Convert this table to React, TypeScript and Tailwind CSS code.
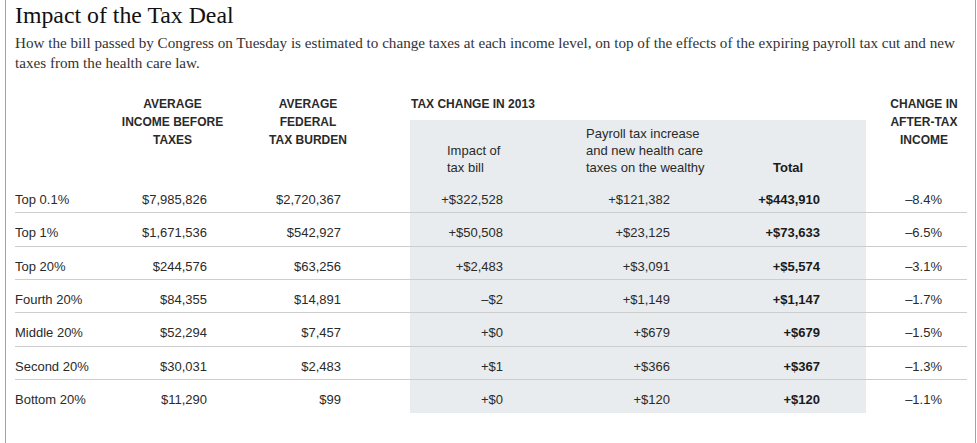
import React from "react";

const rows: [string, string, string, string, string, string, string][] = [
  ["Top 0.1%", "$7,985,826", "$2,720,367", "+$322,528", "+$121,382", "+$443,910", "–8.4%"],
  ["Top 1%", "$1,671,536", "$542,927", "+$50,508", "+$23,125", "+$73,633", "–6.5%"],
  ["Top 20%", "$244,576", "$63,256", "+$2,483", "+$3,091", "+$5,574", "–3.1%"],
  ["Fourth 20%", "$84,355", "$14,891", "–$2", "+$1,149", "+$1,147", "–1.7%"],
  ["Middle 20%", "$52,294", "$7,457", "+$0", "+$679", "+$679", "–1.5%"],
  ["Second 20%", "$30,031", "$2,483", "+$1", "+$366", "+$367", "–1.3%"],
  ["Bottom 20%", "$11,290", "$99", "+$0", "+$120", "+$120", "–1.1%"],
];

const cols = "grid grid-cols-[105px_105px_166px_19px_126px_216px_114px_101px]";

export default function App() {
  return (
    <div className="h-[443px] w-[977px] bg-white overflow-hidden">
      <div className="ml-[5px] w-[971px] h-full border-l border-r border-[#a3a3a3] pl-[9px] pr-[8px] pt-[1px]">
        <h1 className="font-['Liberation_Serif',serif] text-[23.8px] leading-[28px] text-[#111] font-normal">
          Impact of the Tax Deal
        </h1>
        <p className="mt-[3.5px] font-['Liberation_Serif',serif] text-[15.15px] leading-[20px] text-[#333] w-[950px]">
          How the bill passed by Congress on Tuesday is estimated to change taxes at each income level, on top of the effects of the expiring payroll tax cut and new taxes from the health care law.
        </p>

        <div className="mt-[22.5px] font-['Liberation_Sans',Arial,sans-serif] text-[#2a2a2a]">
          {/* header */}
          <div className={`${cols} grid-rows-[25px_60px]`}>
            <div className="row-span-2" />
            <div className="row-span-2 text-center text-[12px] font-bold leading-[18px] uppercase">
              Average
              <br />
              Income before
              <br />
              Taxes
            </div>
            <div className="row-span-2 text-center text-[12px] font-bold leading-[18px] uppercase">
              Average
              <br />
              Federal
              <br />
              Tax burden
            </div>
            <div className="row-span-2" />
            <div className="col-span-3 pl-[1px] text-[12px] font-bold leading-[18px] uppercase whitespace-nowrap">
              Tax change in 2013
            </div>
            <div className="row-span-2 pl-[15px] text-center text-[12px] font-bold leading-[18px] uppercase">
              Change in
              <br />
              After-tax
              <br />
              Income
            </div>
            <div className="bg-[#e8ecee] flex items-end pl-[37px] pb-[3.7px] text-[13px] leading-[17px]">
              <div>
                Impact of
                <br />
                tax bill
              </div>
            </div>
            <div className="bg-[#e8ecee] flex items-end pl-[50px] pb-[3.7px] text-[13px] leading-[17px]">
              <div>
                Payroll tax increase
                <br />
                and new health care
                <br />
                taxes on the wealthy
              </div>
            </div>
            <div className="bg-[#e8ecee] flex items-end pl-[21px] pb-[3.7px] text-[13px] leading-[17px] font-bold text-[#1a1a1a]">
              <div>Total</div>
            </div>
          </div>

          {/* body */}
          {rows.map((r, i) => (
            <div
              key={r[0]}
              className={`${cols} h-[33.33px] text-[13px] leading-[17px] ${
                i < rows.length - 1 ? "border-b border-[#cdcdcd]" : ""
              }`}
            >
              <div className="pt-[11px]">{r[0]}</div>
              <div className="pt-[11px] text-right pr-[18px]">{r[1]}</div>
              <div className="pt-[11px] text-right pr-[50px]">{r[2]}</div>
              <div />
              <div className="pt-[11px] text-right pr-[33px] bg-[#e8ecee]">{r[3]}</div>
              <div className="pt-[11px] text-right pr-[82px] bg-[#e8ecee]">{r[4]}</div>
              <div className="pt-[11px] text-right pr-[46px] bg-[#e8ecee] font-bold text-[#1a1a1a]">{r[5]}</div>
              <div className="pt-[11px] text-right pr-[25px]">{r[6]}</div>
            </div>
          ))}
        </div>
      </div>
    </div>
  );
}
